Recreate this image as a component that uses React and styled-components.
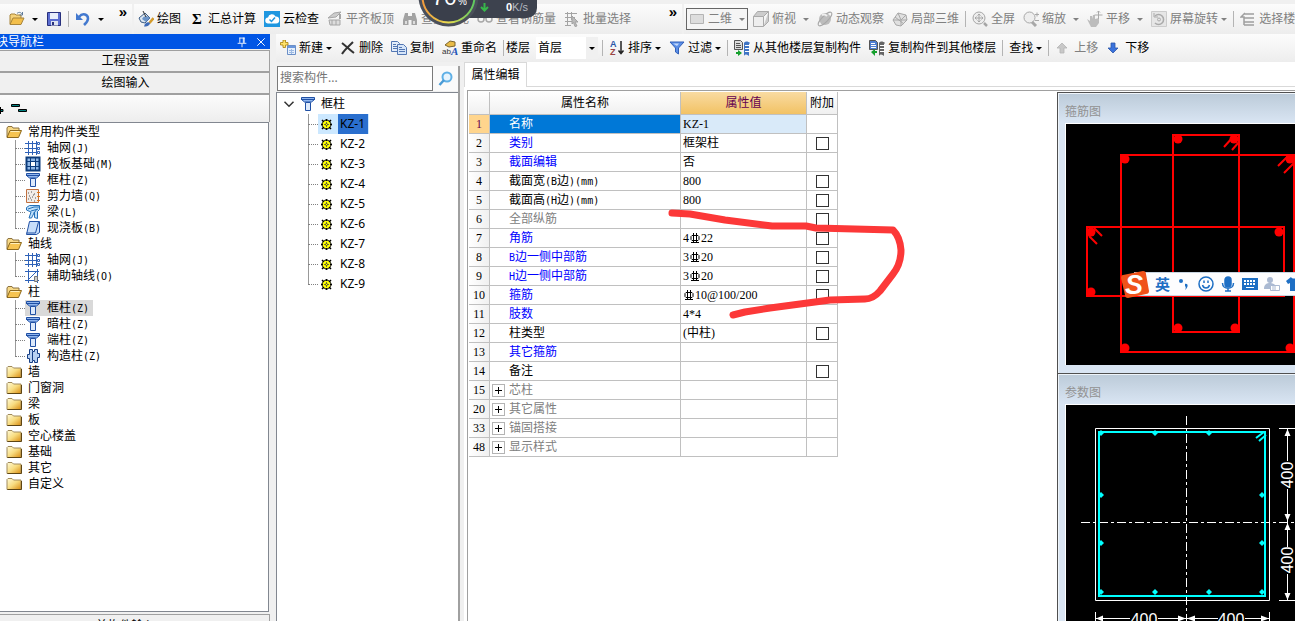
import React from 'react';
import styled, { createGlobalStyle, css } from 'styled-components';

const GlobalStyle = createGlobalStyle`
  * {
    box-sizing: border-box;
  }

  body {
    margin: 0;
    overflow: hidden;
    background: #f0f0f0;
    color: #000;
    font-family: "Noto Sans", "Noto Sans CJK SC", sans-serif;
    font-size: 12px;
    line-height: 16px;
  }

  button, input, select {
    font: inherit;
    color: inherit;
  }

  svg {
    display: block;
    flex: none;
  }
`;

const Page = styled.div`
  position: relative;
  display: flex;
  flex-direction: column;
  height: 100vh;
  overflow: hidden;
`;

/* ---------- toolbars ---------- */

const TopBar = styled.header`
  display: flex;
  flex: none;
  height: 34px;
  padding-top: 4px;
  gap: 2px;
`;

const BarGroup = styled.div`
  display: flex;
  align-items: center;
  overflow: hidden;
  white-space: nowrap;
  background: linear-gradient(#fcfcfc, #ededed);
  flex: ${(p) => p.$flex || 'none'};
  width: ${(p) => p.$width || 'auto'};
  padding-left: ${(p) => p.$left || '0'};
`;

const ItemBar = styled(BarGroup)`
  height: 28px;
`;

const ToolButton = styled.button`
  display: flex;
  align-items: center;
  flex: none;
  gap: 3px;
  height: 22px;
  padding: 0 4px;
  border: 0;
  background: none;
  white-space: nowrap;
  color: ${(p) => (p.$dim ? '#808080' : '#000')};

  ${(p) => p.$boxed && css`
    padding: 0 2px;
    border: 1px solid #666;
    background: #f5f5f5;
    margin-right: 1px;
  `}
`;

const Caret = styled.i`
  flex: none;
  border: 3px solid transparent;
  border-top-color: currentColor;
  border-bottom: 0;
  margin-left: ${(p) => (p.$tight ? '0' : '4px')};
`;

const Divider = styled.span`
  flex: none;
  width: 1px;
  height: 16px;
  margin: 0 2px;
  background: #b4b4b4;
`;

const More = styled.button`
  align-self: flex-start;
  width: 18px;
  padding: 0;
  margin-left: auto;
  border: 0;
  background: none;
  font: bold 15px/16px "Liberation Sans", sans-serif;
`;

const FloorLabel = styled.label`
  display: flex;
  align-items: center;
  gap: 6px;
  padding-right: 2px;
`;

const FloorPicker = styled.span`
  display: flex;
  align-items: center;
  width: 62px;
  height: 22px;
  background: linear-gradient(90deg, #fff 50px, #f0f0f0 50px);

  ${Caret} {
    margin-left: -9px;
    pointer-events: none;
  }
`;

const FloorSelect = styled.select`
  appearance: none;
  width: 62px;
  height: 22px;
  padding: 0 2px;
  border: 0;
  background: none;
`;

/* ---------- left navigation ---------- */

const Workspace = styled.div`
  display: flex;
  flex: 1;
  min-height: 0;
`;

const Sidebar = styled.aside`
  display: flex;
  flex-direction: column;
  flex: none;
  width: 276px;
  padding-right: 6px;
`;

const SidebarTitle = styled.div`
  display: flex;
  align-items: center;
  flex: none;
  height: 15px;
  padding-right: 4px;
  gap: 7px;
  overflow: hidden;
  color: #fff;
  background: #0055e5;
`;

const TitleText = styled.span`
  flex: 1;
  margin-left: -16px;
`;

const TitleButton = styled.button`
  display: flex;
  padding: 0;
  border: 0;
  background: none;
  color: #fff;
`;

const SectionButton = styled.button`
  flex: none;
  height: 22px;
  padding: 0 18px 0 0;
  border: solid #a0a0a0;
  border-width: 1px 1px 1px 0;
  background: #f0f0f0;
  margin-top: ${(p) => (p.$first ? '1px' : '0')};
`;

const TreeTools = styled.div`
  display: flex;
  flex: none;
  align-items: center;
  height: 28px;
  border: solid #a0a0a0;
  border-width: 1px 1px 0 0;
  background: linear-gradient(#fcfcfc, #ededed);
`;

const NavTree = styled.ul`
  flex: 1;
  min-height: 0;
  margin: 0 1px 2px 0;
  padding: 1px 0 0 6px;
  overflow: hidden;
  list-style: none;
  border: solid #828790;
  border-width: 1px 1px 1px 0;
  background: #fff;
`;

const NavChildren = styled.ul`
  margin: 0;
  padding: 0 0 0 9px;
  list-style: none;
`;

const NavRow = styled.div`
  display: flex;
  align-items: center;
  gap: 6px;
  height: 16px;
  width: max-content;
  padding-right: 4px;
  white-space: nowrap;
  background: ${(p) => (p.$active ? '#d9d9d9' : 'none')};
`;

const NavItem = styled.li`
  display: flex;
  align-items: center;
  background: linear-gradient(#999, #999) left top / 1px 100% no-repeat;

  &::before {
    content: "";
    width: 10px;
    border-top: 1px dotted #808080;
  }

  &:last-child {
    background-size: 1px 50%;
  }
`;

const Half = styled.span`
  font: 10px "DejaVu Sans Mono", monospace;
`;

const BottomButton = styled(SectionButton)`
  height: 24px;
  margin-bottom: -17px;
`;

/* ---------- component list ---------- */

const Right = styled.div`
  display: flex;
  flex-direction: column;
  flex: 1;
  min-width: 0;
`;

const Panels = styled.div`
  display: flex;
  flex: 1;
  min-height: 0;
`;

const ListPanel = styled.section`
  display: flex;
  flex-direction: column;
  flex: none;
  width: 184px;
  margin: 4px 4px 0 0;
  border-right: 2px solid #a0a0a0;
`;

const SearchRow = styled.div`
  display: flex;
  height: 26px;
  padding: 0 0 1px 1px;
`;

const SearchInput = styled.input`
  flex: 1;
  min-width: 0;
  padding: 0 2px 2px;
  border: 1px solid #7a7a7a;
  outline: 0;
  background: #fff;

  &::placeholder {
    color: #757575;
  }
`;

const SearchButton = styled.button`
  display: flex;
  align-items: center;
  justify-content: center;
  width: 25px;
  padding: 0;
  border: 0;
  background: #fafafa;
`;

const ItemTree = styled.div`
  flex: 1;
  padding: 1px 0 0 6px;
  border: solid #828790;
  border-width: 1px 0 0 1px;
  background: #fff;
`;

const ItemRoot = styled.div`
  display: flex;
  align-items: center;
  height: 20px;
  gap: 5px;
`;

const ItemList = styled.ul`
  margin: 0 0 0 25px;
  padding: 0;
  list-style: none;
`;

const ItemRow = styled(NavItem)`
  height: 20px;
`;

const ItemBody = styled.span`
  display: flex;
  align-items: center;
  gap: 5px;
  height: 20px;
  padding: 0 1px 0 2px;
  background: ${(p) => (p.$active ? '#cce8ff' : 'none')};
`;

const ItemLabel = styled.span`
  padding: 0 3px 0 2px;
  line-height: 20px;
  background: ${(p) => (p.$active ? '#2a6fce' : 'none')};
`;

/* ---------- property editor ---------- */

const Editor = styled.section`
  display: flex;
  flex-direction: column;
  flex: 1;
  min-width: 0;
  background: #fff;
`;

const TabStrip = styled.div`
  display: flex;
  flex: none;
  height: 25px;

  &::after {
    content: "";
    flex: 1;
    border-bottom: 1px solid #d9d9d9;
  }
`;

const Tab = styled.button`
  width: 63px;
  padding: 0;
  border: 1px solid #d9d9d9;
  border-bottom: 0;
  background: #fff;
`;

const EditorBody = styled.div`
  display: flex;
  flex: 1;
  align-items: flex-start;
  justify-content: space-between;
  min-height: 0;
  margin: 3px 0 0 3px;
  padding: 1px 0 0 1px;
  border: solid #a0a0a0;
  border-width: 1px 0 0 1px;
`;

const Grid = styled.table`
  width: 369px;
  flex: none;
  border-collapse: separate;
  border-spacing: 0;
  table-layout: fixed;
`;

const HeadCell = styled.th`
  width: ${(p) => p.$width};
  height: 23px;
  padding: 0;
  font-weight: normal;
  border: solid #c0c0c0;
  border-width: 0 1px 1px 0;
  color: ${(p) => (p.$active ? '#640050' : '#000')};
  background: ${(p) => (p.$active ? 'linear-gradient(#f9dba2, #f2c264)' : 'linear-gradient(#fff, #f0f0f0)')};
`;

const Cell = styled.td`
  height: 19px;
  padding: 0 0 0 2px;
  line-height: 16px;
  white-space: nowrap;
  border: solid #c0c0c0;
  border-width: 0 1px 1px 0;
  background: ${(p) => (p.$active ? '#d9eaf9' : '#fff')};
  font-family: "Liberation Serif", "Noto Sans CJK SC", serif;
`;

const NumberCell = styled(Cell)`
  padding: 0;
  text-align: center;
  color: ${(p) => (p.$active ? '#640050' : '#000')};
  background: ${(p) => (p.$active ? '#ffd58d' : 'linear-gradient(90deg, #fff, #f0f0f0)')};
`;

const tones = { blue: '#0000ff', grey: '#808080', black: '#000' };

const NameCell = styled(Cell)`
  color: ${(p) => (p.$active ? '#fff' : tones[p.$tone])};
  background: ${(p) => (p.$active ? '#0078d7' : '#fff')};
`;

const NameLine = styled.div`
  display: flex;
  align-items: center;
  gap: 4px;
  padding-left: ${(p) => (p.$indent ? '17px' : '0')};
`;

const Expander = styled.button`
  display: flex;
  align-items: center;
  justify-content: center;
  width: 13px;
  height: 13px;
  padding: 0;
  border: 1px solid #b4b4b4;
  background: #fff;
  color: #000;
`;

const ValueLine = styled.div`
  display: flex;
  align-items: center;
  gap: 1px;
`;

const CheckCell = styled(Cell)`
  padding: 0;
`;

const Tick = styled.input`
  appearance: none;
  display: block;
  width: 13px;
  height: 13px;
  margin: 0 auto;
  border: 1px solid #333;
  background: #fff;
`;

/* ---------- drawings ---------- */

const Dock = styled.aside`
  flex: none;
  width: 238px;
`;

const Drawing = styled.section`
  padding: 1px 0 8px 7px;
  border: solid #505050;
  border-width: 1px 0 0 1px;
  background: #d9e5f3;
  box-shadow: inset 1px 1px #eef4fa;
  overflow: hidden;
`;

const DrawingTitle = styled.h2`
  margin: 0 0 0 -6px;
  padding: 10px 0 3px 6px;
  font-size: 12px;
  line-height: 16px;
  font-weight: normal;
  color: #929292;
  background: linear-gradient(#bccbd9, #d9e5f3);
`;

const Canvas = styled.svg`
  border: solid #fff;
  border-width: 1px 0 0 1px;
  background: #000;
`;

/* ---------- floating things ---------- */

const Marker = styled.svg`
  position: absolute;
  left: 660px;
  top: 200px;
  pointer-events: none;
`;

const Ime = styled.div`
  position: absolute;
  top: 269px;
  right: 0;
  width: 174px;
  height: 30px;
  display: flex;
  align-items: center;
`;

const ImeStrip = styled.div`
  display: flex;
  align-items: center;
  flex: 1;
  gap: 6px;
  height: 24px;
  margin-left: -16px;
  padding-left: 21px;
  overflow: hidden;
  color: #1e6fc4;
  border: solid #c8d4e0;
  border-width: 1px 0;
  background: #fdfdfe;
`;

const ImeLogo = styled.svg`
  position: relative;
`;

const ImeMode = styled.b`
  font-size: 15px;
  line-height: 20px;
`;

const Monitor = styled.div`
  position: absolute;
  left: 418px;
  top: -34px;
  display: flex;
  align-items: flex-end;
  height: 61px;
  color: #fff;
`;

const Speed = styled.div`
  display: flex;
  align-items: center;
  justify-content: space-between;
  width: 88px;
  height: 22px;
  margin: 0 0 9px -30px;
  padding: 0 9px 0 31px;
  border-radius: 0 0 10px 0;
  background: #3d424e;
  font: 11px "Liberation Sans", sans-serif;

  small {
    font-size: 11px;
    color: #b4b8c0;
  }
`;

const Ball = styled.svg`
  z-index: 1;
`;

/* ---------- icons ---------- */

const Svg = ({ size = 16, children, ...rest }) => (
  <svg width={size} height={size} viewBox="0 0 16 16" fill="none" {...rest}>
    {children}
  </svg>
);

const OpenFolder = () => (
  <Svg>
    <path d="M1 13V4l1-1h4l1 1h5v3" fill="#f5d27a" stroke="#a8843a" />
    <path d="M1 13.500 4 7h11l-3 6.500z" fill="#f3bf4b" stroke="#a8843a" />
    <path d="M8 2.500c2-2 4-1 5 .5M13.500 1v3h-3" stroke="#5d7a99" />
  </Svg>
);
const TreeFolderOpen = () => (
  <Svg>
    <path d="M1 13V4l1-1.500h4L7 4h6v3" fill="#f7d987" stroke="#8d7340" />
    <path d="M1 13.500 4 6.500h11.500l-3 7z" fill="#f6c452" stroke="#8d6a20" />
    <path d="M4.500 7.500h9" stroke="#fff0bd" />
  </Svg>
);
const TreeFolder = () => (
  <Svg>
    <defs>
      <linearGradient id="folder" x1="0" y1="0" x2="1" y2="1">
        <stop offset="0" stopColor="#fffbd8" />
        <stop offset=".5" stopColor="#f8dc80" />
        <stop offset="1" stopColor="#d98c10" />
      </linearGradient>
    </defs>
    <path d="M1 13V3.500L2 2.500h4L7.500 4H15v9.500H1z" fill="url(#folder)" stroke="#a08a5c" />
    <path d="M1.500 13.500h14V5" stroke="#5e4513" />
  </Svg>
);
const Save = () => (
  <Svg>
    <path d="M1.500 1.500h13v13h-13z" fill="#5b6dd0" stroke="#28307c" />
    <path d="M4 2h8v6H4z" fill="#e8eefb" />
    <path d="M5 10h7v4.500H5z" fill="#dde3f0" />
    <path d="M6 11h2v3H6z" fill="#28307c" />
  </Svg>
);
const Undo = () => (
  <Svg>
    <path d="M4 6c4-5 9-2 9 1.500 0 3-2 4.500-4 6.500" stroke="#4379cf" strokeWidth="2.500" />
    <path d="M1 2v7h7z" fill="#4379cf" />
  </Svg>
);
const Paint = () => (
  <Svg>
    <path d="m1 7 6-5 5 5-5 5-4-1z" fill="#dce7f2" stroke="#3c5d86" />
    <path d="M4 8c1-3 5-4 8-1l-4 4z" fill="#6b94c8" />
    <path d="m5 0 3 6" stroke="#333" />
    <path d="m15.500 7-4 5" stroke="#d49b2b" strokeWidth="2.500" />
    <path d="M6 15.500c1-4 4-5 6-3.500 0 2-3 4-6 3.500z" fill="#3d6bb8" />
  </Svg>
);
const Sigma = () => (
  <Svg>
    <text x="3" y="13" fontFamily="Liberation Serif, serif" fontWeight="bold" fontSize="15" fill="#000">Σ</text>
  </Svg>
);
const Cloud = () => (
  <Svg>
    <path d="M0 0h16v16H0z" fill="#1f97e0" />
    <path d="M4.500 12.500a3 3 0 0 1-.5-6 4 4 0 0 1 7.500-1 3.500 3.500 0 0 1 .5 7z" fill="#fff" />
    <path d="m5.500 8.500 2 2 3.500-4" stroke="#1f97e0" strokeWidth="1.500" />
  </Svg>
);
const AlignTop = () => (
  <Svg stroke="#a6a6a6">
    <path d="m1 7 6-5 7-1-5 5z" fill="#ccc" />
    <path d="M2 9h11v5H3zM5 9v5M9 9v5" fill="#ddd" />
    <path d="M13 3v5" strokeWidth="2" />
  </Svg>
);
const Binoculars = () => (
  <Svg fill="#a3a3a3">
    <path d="M3 2h3v3h4V2h3l2 7v5H9.500V9h-3v5H1V9z" />
    <path d="M3 10h2v3H3zM11 10h2v3h-2z" fill="#ddd" />
  </Svg>
);
const Glasses = () => (
  <Svg stroke="#a8a8a8" strokeWidth="1.500">
    <circle cx="4" cy="8" r="3" />
    <circle cx="12" cy="8" r="3" />
    <path d="M7 7h2" />
  </Svg>
);
const BatchPick = () => (
  <Svg stroke="#a3a3a3">
    <path d="M1 2.500h12M1 6.500h10M1 10.500h7M1 14.500h6M3.500 1v14M7.500 1v8" />
    <path d="m8 5 6 6h-3l2 4-2 .5-1.500-4L8 13z" fill="#bbb" />
  </Svg>
);
const Plane = () => (
  <Svg>
    <path d="M1.500 3.500h13v9h-13z" fill="#ddd" stroke="#b4b4b4" />
  </Svg>
);
const Cube = () => (
  <Svg stroke="#aaa">
    <path d="M.500 5.500h10v10h-10z" fill="#eee" />
    <path d="m.5 5.500 4-5h11l-5 5zM15.500.500v10l-5 5" fill="#ccc" />
  </Svg>
);
const Orbit = () => (
  <Svg>
    <circle cx="8" cy="8" r="6" fill="#bdbdbd" />
    <ellipse cx="8" cy="8" rx="9" ry="3" transform="rotate(-45 8 8)" stroke="#a8a8a8" />
    <path d="M5 4c2-1 4 0 5 1" stroke="#eee" strokeWidth="2" />
  </Svg>
);
const Part3d = () => (
  <Svg stroke="#a8a8a8">
    <path d="m1 9 5-7 8 2 1 5-6 6-5-1z" fill="#e0e0e0" />
    <path d="m6 2 3 7v6M1 9h8l6 0M9 9l5-5M3 6l9 7" />
  </Svg>
);
const FullView = () => (
  <Svg stroke="#a6a6a6">
    <circle cx="7" cy="7" r="6" fill="#eee" />
    <path d="M7 3v8M3 7h8M5.500 4.500 7 3l1.500 1.500M5.500 9.500 7 11l1.500-1.500M4.500 5.500 3 7l1.500 1.500M9.500 5.500 11 7 9.500 8.500" />
    <path d="m12 12 3 3" strokeWidth="2.500" />
  </Svg>
);
const Zoom = () => (
  <Svg stroke="#a8a8a8">
    <circle cx="6.500" cy="6.500" r="5.500" fill="#eee" />
    <path d="m9 11 4 4" strokeWidth="3" />
    <path d="M12 3.500h4M14 1.500v4M12 9.500h4" />
  </Svg>
);
const Pan = () => (
  <Svg>
    <path d="m0 8 3 2V5h2v3l1-4h2v4l4-1v5l-3 4H4z" fill="#bcbcbc" />
    <path d="M11.500 0v8M7.500 4h8M10 1.500 11.500 0 13 1.500" stroke="#aaa" />
  </Svg>
);
const Rotate = () => (
  <Svg stroke="#aaa">
    <path d="M.500.500h15v15H.500z" fill="#e6e6e6" stroke="#ccc" />
    <path d="M4 5a5 5 0 1 1 0 7" strokeWidth="1.500" />
    <path d="M3 2v4h4" />
    <circle cx="8" cy="8.500" r="1.500" />
  </Svg>
);
const Floors = () => (
  <Svg stroke="#9f9f9f" strokeWidth="1.500">
    <path d="M4 3h10M4 7h10M4 11h10M4 14h10M5 2 1 6h3v8" />
  </Svg>
);
const NewItem = () => (
  <Svg>
    <path d="M7.500 5.500h8v9h-8z" fill="#e7f0fb" stroke="#6b8fc7" />
    <path d="M8 6h7v2H8z" fill="#6b97dc" />
    <path d="M9 10.500h5M9 12.500h5M11.500 9v5" stroke="#9cb9e2" />
    <path d="M3 0h2.500v2.500H8V5H5.500v2.500H3V5H.5V2.500H3z" fill="#ffe26a" stroke="#a67e0b" strokeWidth=".8" />
  </Svg>
);
const Cross = () => (
  <Svg stroke="#333" strokeWidth="2">
    <path d="M2 3c5 4 8 7 12 10M13 2C9 6 5 9 2 14" />
  </Svg>
);
const Copy = () => (
  <Svg stroke="#5377b3">
    <path d="M.500 1.500h6l2 2v8h-8z" fill="#e4eefb" />
    <path d="M2 4.500h3M2 6.500h4M2 8.500h4" />
    <path d="M6.500 4.500h6l3 3v7h-9z" fill="#d6e5f9" />
    <path d="M8 7.500h3M8 9.500h6M8 11.500h6" />
  </Svg>
);
const Rename = () => (
  <Svg>
    <path d="m3 5 5-4 5 1v4L7 7z" fill="#e8bb48" stroke="#7a6430" />
    <text x="0" y="14" fontFamily="Liberation Sans, sans-serif" fontSize="8" fill="#333">ab</text>
    <text x="9" y="15" fontFamily="Liberation Serif, serif" fontStyle="italic" fontWeight="bold" fontSize="11" fill="#2455b8">A</text>
  </Svg>
);
const Sort = () => (
  <Svg>
    <g fontFamily="Liberation Sans, sans-serif" fontWeight="bold" fontSize="9">
      <text x="1" y="7" fill="#2b56a8">A</text>
      <text x="1" y="15" fill="#944">Z</text>
    </g>
    <path d="M12 1v12M9.500 10.500l2.500 3 2.500-3" stroke="#222" strokeWidth="1.500" />
  </Svg>
);
const Filter = () => (
  <Svg>
    <path d="M1 2h14L9.500 8v6l-3-2V8z" fill="#5b8fe8" stroke="#3260b8" />
    <path d="M4 3.500h6L8 6z" fill="#c3d9fb" />
  </Svg>
);
const CopyFloor = ({ out }) => (
  <Svg>
    <path d="M.500.500h6l2 2v7h-8z" fill={out ? '#4f7ed0' : '#ddd'} stroke="#555" />
    <path d="M2 3.500h4M2 5.500h5M2 7.500h5" stroke={out ? '#fff' : '#555'} />
    <path d="M10 3c1-2 4-2 6 0l-1 1v12c-2-2-4-2-5 0z" fill={out ? '#666' : '#3f74c4'} />
    <path d="M11 5.500h5M11 8.500h5M11 11.500h5" stroke="#fff" />
    <path d={out ? 'M2 12l4-3v2h2v2H6v3z' : 'M8 13l-4-3v2H2v2h2v2z'} fill="#15a02c" />
  </Svg>
);
const Arrow = ({ up }) => (
  <Svg>
    <path
      d="M5 3h4v5h3L7 13 2 8h3z"
      transform={up ? 'rotate(180 7 8)' : undefined}
      fill={up ? '#c8c8c8' : '#3a72dc'}
      stroke={up ? '#b4b4b4' : '#2c55a8'}
      strokeWidth=".8"
    />
  </Svg>
);
const GridIcon = () => (
  <Svg stroke="#2f62b8">
    <path d="M0 3.500h12M0 8.500h12M0 12.500h12M3.500 1v14M7.500 1v14M11.500 1v14" />
    <path d="M12.500 2.500h2v2h-2zM12.500 7.500h2v2h-2zM12.500 11.500h2v2h-2z" fill="#fff" />
  </Svg>
);
const Raft = () => (
  <Svg stroke="#0c3c7c">
    <path d="M1.500 1.500h13v13h-13z" fill="#8fb7e6" strokeWidth="2" />
    <path d="M5.500 5.500h5v5h-5z" fill="#fff" />
    <path d="M1 5.500h14M1 10.500h14M5.500 1v14M10.500 1v14" />
  </Svg>
);
const Column = () => (
  <Svg>
    <path d="M1.500 1.500h13v2l-3 2.500h-7l-3-2.500z" fill="#8fb5ee" stroke="#2050a4" />
    <path d="M5.500 6.500h5v8h-5z" fill="#dce9fb" stroke="#2050a4" />
    <path d="M1 3.500h14" stroke="#2050a4" />
  </Svg>
);
const Wall = () => (
  <Svg>
    <path d="M1.500 1.500h12v13h-12z" fill="#f1ece8" stroke="#c07040" />
    <path d="M3 5h1M6 4h1M9 6h1M4 8h1M7 9h1M10 10h1M3 11h1M6 12h1M9 13h1M5 10h1M8 7h1" stroke="#555" />
    <path d="M12 4.500h3M12 8.500h3M12 12.500h3" stroke="#e07818" />
  </Svg>
);
const Beam = () => (
  <Svg>
    <path d="m1.500 3.500 3-2h10v4l-2 2v7l-3-1V8l-3 6H4l2-6-4.500-2z" fill="#bfe0fa" stroke="#2470b8" />
    <path d="m3 5 6-2 5 0M6 7l7-2M9 9l3-4" stroke="#2470b8" />
  </Svg>
);
const Slab = () => (
  <Svg>
    <path d="M4.500 1.500h10v11l-3 2h-10z" fill="#c8defa" stroke="#2050a4" />
    <path d="M1.500 13h9l3-11" stroke="#2050a4" />
  </Svg>
);
const AuxAxis = () => (
  <Svg stroke="#2f62b8">
    <path d="M0 3.500h14M3.500 1v14M12.500 1v14M0 12.500h14M2 13l9-9" />
    <path d="M9.500 8.500h3v5h-3z" fill="#ccc" stroke="#777" />
  </Svg>
);
const Structural = () => (
  <Svg>
    <path d="M4.500 1.500h3v2h2v-2h3v4h2v4h-2v5h-3v-2h-2v2h-3v-4h-2v-4h2z" fill="#b9d2f2" stroke="#173f86" />
    <path d="M7.500 4v8" stroke="#173f86" />
  </Svg>
);
const Gear = () => (
  <svg width="13" height="13" viewBox="0 0 13 13" fill="none">
    <circle cx="6.500" cy="6.500" r="4.500" fill="#ff0" stroke="#222" />
    <path
      d="M6.500 1v2M6.500 10v2M1 6.500h2M10 6.500h2M2 2l2 2M9 9l2 2M11 2 9 4M4 9l-2 2"
      stroke="#000"
      strokeWidth="1.500"
    />
    <path d="M6.500 4.500h.01M6.500 8.500h.01M4.500 6.500h.01M8.500 6.500h.01" stroke="#666" strokeLinecap="square" />
    <circle cx="6.500" cy="6.500" r="1" fill="#ff0" stroke="#222" strokeWidth=".8" />
  </svg>
);
const Magnifier = () => (
  <Svg>
    <circle cx="9" cy="6" r="4.500" fill="#e7f4fd" stroke="#5fb0e6" strokeWidth="2" />
    <path d="m6 9-4.500 5" stroke="#4a9bd6" strokeWidth="2.500" />
  </Svg>
);
const Rebar = () => (
  <svg width="10" height="11" viewBox="0 0 10 11" fill="none" stroke="#000">
    <path d="M2 2.500h6l1 1v3l-1 1H2l-1-1v-3zM3.500 0v9M6.500 0v9M1 9.500h8" />
  </svg>
);

/* ---------- data ---------- */

const nav = [
  {
    name: '常用构件类型',
    items: [
      ['轴网(J)', GridIcon],
      ['筏板基础(M)', Raft],
      ['框柱(Z)', Column],
      ['剪力墙(Q)', Wall],
      ['梁(L)', Beam],
      ['现浇板(B)', Slab],
    ],
  },
  { name: '轴线', items: [['轴网(J)', GridIcon], ['辅助轴线(O)', AuxAxis]] },
  {
    name: '柱',
    items: [
      ['框柱(Z)', Column, true],
      ['暗柱(Z)', Column],
      ['端柱(Z)', Column],
      ['构造柱(Z)', Structural],
    ],
  },
  ...['墙', '门窗洞', '梁', '板', '空心楼盖', '基础', '其它', '自定义'].map((name) => ({ name })),
];

// "#" in a value stands for the rebar grade sign
const properties = [
  { no: 1, name: '名称', value: 'KZ-1', active: true },
  { no: 2, name: '类别', value: '框架柱', tone: 'blue', tick: true },
  { no: 3, name: '截面编辑', value: '否', tone: 'blue' },
  { no: 4, name: '截面宽(B边)(mm)', value: '800', tick: true },
  { no: 5, name: '截面高(H边)(mm)', value: '800', tick: true },
  { no: 6, name: '全部纵筋', value: '', tone: 'grey', tick: true },
  { no: 7, name: '角筋', value: '4#22', tone: 'blue', tick: true },
  { no: 8, name: 'B边一侧中部筋', value: '3#20', tone: 'blue', tick: true },
  { no: 9, name: 'H边一侧中部筋', value: '3#20', tone: 'blue', tick: true },
  { no: 10, name: '箍筋', value: '#10@100/200', tone: 'blue', tick: true },
  { no: 11, name: '肢数', value: '4*4', tone: 'blue' },
  { no: 12, name: '柱类型', value: '(中柱)', tick: true },
  { no: 13, name: '其它箍筋', value: '', tone: 'blue' },
  { no: 14, name: '备注', value: '', tick: true },
  { no: 15, name: '芯柱', value: '', tone: 'grey', group: true },
  { no: 20, name: '其它属性', value: '', tone: 'grey', group: true },
  { no: 33, name: '锚固搭接', value: '', tone: 'grey', group: true },
  { no: 48, name: '显示样式', value: '', tone: 'grey', group: true },
];

const MixedText = ({ children }) => (
  <span>
    {children.split(/([!-~]+)/).map((part, i) => (i % 2 ? <Half key={i}>{part}</Half> : part))}
  </span>
);

const Tool = ({ icon: Icon, label, caret, tight, ...rest }) => (
  <ToolButton {...rest}>
    {Icon && <Icon />}
    {label}
    {caret && <Caret $tight={tight} />}
  </ToolButton>
);

const TopToolbar = () => (
  <TopBar>
    <BarGroup $width="132px" $left="5px">
      <Tool icon={OpenFolder} caret aria-label="打开" />
      <Tool icon={Save} aria-label="保存" />
      <Divider />
      <Tool icon={Undo} caret aria-label="撤销" />
      <More>»</More>
    </BarGroup>
    <BarGroup $width="548px">
      <Tool icon={Paint} label="绘图" />
      <Tool icon={Sigma} label="汇总计算" />
      <Tool icon={Cloud} label="云检查" />
      <Tool icon={AlignTop} label="平齐板顶" $dim />
      <Tool icon={Binoculars} label="查找图元" $dim />
      <Tool icon={Glasses} label="查看钢筋量" $dim />
      <Tool icon={BatchPick} label="批量选择" $dim />
      <More>»</More>
    </BarGroup>
    <BarGroup $flex="1" $left="2px">
      <Tool icon={Plane} label="二维" caret $dim $boxed />
      <Tool icon={Cube} label="俯视" caret $dim />
      <Tool icon={Orbit} label="动态观察" $dim />
      <Tool icon={Part3d} label="局部三维" $dim />
      <Divider />
      <Tool icon={FullView} label="全屏" $dim />
      <Tool icon={Zoom} label="缩放" caret $dim />
      <Tool icon={Pan} label="平移" caret $dim />
      <Tool icon={Rotate} label="屏幕旋转" caret tight $dim />
      <Divider />
      <Tool icon={Floors} label="选择楼层" $dim />
    </BarGroup>
  </TopBar>
);

const ComponentToolbar = () => (
  <ItemBar>
    <Tool icon={NewItem} label="新建" caret tight />
    <Tool icon={Cross} label="删除" />
    <Tool icon={Copy} label="复制" />
    <Tool icon={Rename} label="重命名" />
    <Divider />
    <FloorLabel>
      楼层
      <FloorPicker>
        <FloorSelect defaultValue="首层">
          <option>首层</option>
        </FloorSelect>
        <Caret />
      </FloorPicker>
    </FloorLabel>
    <Divider />
    <Tool icon={Sort} label="排序" caret tight />
    <Tool icon={Filter} label="过滤" caret tight />
    <Divider />
    <Tool icon={CopyFloor} label="从其他楼层复制构件" />
    <Tool icon={() => <CopyFloor out />} label="复制构件到其他楼层" />
    <Divider />
    <Tool label="查找" caret tight />
    <Divider />
    <Tool icon={() => <Arrow up />} label="上移" $dim />
    <Tool icon={Arrow} label="下移" />
  </ItemBar>
);

const Navigation = () => (
  <Sidebar>
    <SidebarTitle>
      <TitleText>模块导航栏</TitleText>
      <TitleButton aria-label="固定">
        <Svg size={14} stroke="#fff">
          <path d="M5.500 3v6M10.500 3v6M5 3.500h6M3 9.500h10M8 10v4M9.500 3v6" />
        </Svg>
      </TitleButton>
      <TitleButton aria-label="关闭">
        <Svg size={10} stroke="#fff" strokeWidth="1.500">
          <path d="m2 2 12 12M14 2 2 14" />
        </Svg>
      </TitleButton>
    </SidebarTitle>
    <SectionButton $first>工程设置</SectionButton>
    <SectionButton>绘图输入</SectionButton>
    <TreeTools>
      <svg width="30" height="16" viewBox="0 0 30 16" fill="#008080" stroke="#000">
        <path d="M-3 8.500h6v2h-6zM11.500 3.500h8v2h-8zM18.500 8.500h8v2h-8z" />
        <path d="M.5 6v7" />
      </svg>
    </TreeTools>
    <NavTree>
      {nav.map((group) => (
        <li key={group.name}>
          <NavRow>
            {group.items ? <TreeFolderOpen /> : <TreeFolder />}
            <span>{group.name}</span>
          </NavRow>
          {group.items && (
            <NavChildren>
              {group.items.map(([name, Icon, active]) => (
                <NavItem key={name}>
                  <NavRow $active={active}>
                    <Icon />
                    <MixedText>{name}</MixedText>
                  </NavRow>
                </NavItem>
              ))}
            </NavChildren>
          )}
        </li>
      ))}
    </NavTree>
    <BottomButton>单构件输入</BottomButton>
  </Sidebar>
);

const ComponentList = () => (
  <ListPanel>
    <SearchRow>
      <SearchInput placeholder="搜索构件..." aria-label="搜索构件" />
      <SearchButton aria-label="搜索">
        <Magnifier />
      </SearchButton>
    </SearchRow>
    <ItemTree>
      <ItemRoot>
        <Svg size={12} stroke="#333" strokeWidth="2">
          <path d="m2 5 6 6 6-6" />
        </Svg>
        <Column />
        框柱
      </ItemRoot>
      <ItemList>
        {[1, 2, 3, 4, 5, 6, 7, 8, 9].map((n) => (
          <ItemRow key={n}>
            <ItemBody $active={n === 1}>
              <Gear />
              <ItemLabel $active={n === 1}>KZ-{n}</ItemLabel>
            </ItemBody>
          </ItemRow>
        ))}
      </ItemList>
    </ItemTree>
  </ListPanel>
);

const PropertyTable = () => (
  <Grid>
    <thead>
      <tr>
        <HeadCell $width="21px" />
        <HeadCell $width="191px">属性名称</HeadCell>
        <HeadCell $width="126px" $active>属性值</HeadCell>
        <HeadCell $width="31px">附加</HeadCell>
      </tr>
    </thead>
    <tbody>
      {properties.map(({ no, name, value, tone = 'black', active, tick, group }) => (
        <tr key={no}>
          <NumberCell $active={active}>{no}</NumberCell>
          <NameCell $active={active} $tone={tone}>
            <NameLine $indent={!group}>
              {group && (
                <Expander aria-label={`展开${name}`}>
                  <svg width="7" height="7" viewBox="0 0 7 7" stroke="#000">
                    <path d="M0 3.500h7M3.500 0v7" />
                  </svg>
                </Expander>
              )}
              <MixedText>{name}</MixedText>
            </NameLine>
          </NameCell>
          <Cell $active={active}>
            <ValueLine>
              {value.split(/(#)/).map((part, i) => (part === '#' ? <Rebar key={i} /> : <span key={i}>{part}</span>))}
            </ValueLine>
          </Cell>
          <CheckCell>{tick && <Tick type="checkbox" aria-label={`附加${name}`} />}</CheckCell>
        </tr>
      ))}
    </tbody>
  </Grid>
);

const hoopDots = [
  [1178, 139], [1234, 139], [1178, 328], [1235, 328],
  [1125, 159], [1290, 159], [1125, 348], [1290, 348],
  [1091, 232], [1279, 232], [1091, 292],
];

const HoopDrawing = () => (
  <Drawing>
    <DrawingTitle>箍筋图</DrawingTitle>
    <Canvas width="230" height="242" viewBox="1066 124 229 241" fill="none" stroke="#f00" strokeWidth="2">
      <path d="M1173 135h66v197h-66zM1121 155h173v197h-173zM1087 227h197v69h-197z" />
      <path d="m1224 147 9-10M1232 150l7-8M1278 166l11-11M1284 173l10-10M1089 236l8 8M1094 228l8 8" />
      <g fill="#f00" stroke="none">
        {hoopDots.map(([x, y]) => <circle key={`${x}-${y}`} cx={x} cy={y} r="4.500" />)}
      </g>
    </Canvas>
  </Drawing>
);

const bars = [
  [1155, 433], [1209, 433], [1155, 592], [1209, 592],
  [1101, 495], [1101, 543], [1262, 495], [1262, 543],
  [1101, 433], [1101, 592], [1262, 592],
];

const SectionDrawing = () => (
  <Drawing>
    <DrawingTitle>参数图</DrawingTitle>
    <Canvas width="230" height="217" viewBox="1066 405 229 216" fill="none" stroke="#fff">
      <path d="M1095.500 428.500h174v172h-174z" />
      <path d="M1186.500 416v205M1081 522.500h214" strokeDasharray="9 3 3 3" />
      <path d="M1099 432h166v164h-166z" stroke="#0ff" strokeWidth="2" />
      <path d="m1256 438 8-6M1259 441l7-6" stroke="#0ff" strokeWidth="2" />
      <g fill="#0ff" stroke="none">
        {bars.map(([x, y]) => <path key={`${x}-${y}`} d={`M${x - 3} ${y}l3-3 3 3-3 3z`} />)}
      </g>
      <path d="M1279 428.500h16M1279 600.500h16M1287.500 428v33M1287.500 489v58M1287.500 574v26" />
      <path d="M1095.500 612v9M1269.500 612v9M1096 618.500h34M1158 618.500h60M1245 618.500h24" />
      <g fill="#fff" stroke="none">
        <path d="m1287.500 429 3 7h-6zM1287.500 521l3-7h-6zM1287.500 523l3 7h-6zM1287.500 600l3-7h-6z" />
        <path d="m1096 618.500 7-3v6zM1186 618.500l-8-3v6zM1187 618.500l8-3v6zM1269 618.500l-8-3v6z" />
        <g fontFamily="Liberation Sans, sans-serif" fontSize="16" textAnchor="middle">
          <text x="1144" y="625">400</text>
          <text x="1231" y="625">400</text>
          <text transform="translate(1293 475) rotate(-90)">400</text>
          <text transform="translate(1293 560) rotate(-90)">400</text>
        </g>
      </g>
    </Canvas>
  </Drawing>
);

const ImeBar = () => (
  <Ime>
    <ImeLogo width="29" height="29" viewBox="0 0 29 29">
      <path d="M2 5 22 1q3 0 3 3l3 17q0 3-3 3L7 28q-3 0-3-3L0 8q0-3 2-3z" fill="#f0521a" />
      <text x="4" y="24" fontFamily="Liberation Sans, sans-serif" fontWeight="bold" fontStyle="italic" fontSize="27" fill="#fff">S</text>
    </ImeLogo>
    <ImeStrip>
      <ImeMode>英</ImeMode>
      <Svg fill="#1e6fc4">
        <circle cx="5" cy="5" r="2" />
        <path d="M9 8c3-1 4 3 0 6 1-2 1-3 0-4z" />
      </Svg>
      <Svg stroke="#1e6fc4" strokeWidth="1.500">
        <circle cx="8" cy="8" r="7" />
        <path d="M4.500 9c1 4 6 4 7 0M6 4.500v2.500M10 4.500v2.500" />
      </Svg>
      <Svg stroke="#1e6fc4" strokeWidth="1.500">
        <path d="M8 1a3 3 0 0 1 3 3v4a3 3 0 0 1-6 0V4a3 3 0 0 1 3-3z" fill="#1e6fc4" />
        <path d="M2.500 7c0 7 11 7 11 0M8 12v3M5 15h6" />
      </Svg>
      <Svg>
        <path d="M0 2h16v12H0z" fill="#1e6fc4" />
        <path d="M2 5h12M2 8h12" stroke="#fff" strokeWidth="2" strokeDasharray="2 1" />
        <path d="M4 11.500h8" stroke="#fff" />
      </Svg>
      <Svg fill="#aab9d2">
        <circle cx="6" cy="4" r="3" />
        <path d="M0 13c0-5 3-6 6-6s4 1 5 2H7v4z" />
        <path d="M6.500 9.500h9v5h-9zM9 10v4M11 10v4" stroke="#aab9d2" fill="#fff" />
      </Svg>
      <Svg fill="#1e6fc4">
        <path d="m0 5 5-4c1 2 5 2 6 0l5 4-2 3-2-1v8H4V7L2 8z" />
      </Svg>
    </ImeStrip>
  </Ime>
);

const NetMonitor = () => (
  <Monitor>
    <Ball width="61" height="61" viewBox="0 0 61 61">
      <defs>
        <linearGradient id="ring">
          <stop offset="0" stopColor="#f09a3c" />
          <stop offset=".5" stopColor="#e8dc50" />
          <stop offset="1" stopColor="#5cc860" />
        </linearGradient>
      </defs>
      <circle cx="30.500" cy="30.500" r="30" fill="#4a4f5a" />
      <circle cx="30.500" cy="30.500" r="26" fill="#3a3f4b" stroke="url(#ring)" strokeWidth="2" />
      <g fontFamily="Liberation Sans, sans-serif" fill="#fff">
        <text x="14" y="39" fontSize="22">70</text>
        <text x="40" y="39" fontSize="10">%</text>
      </g>
    </Ball>
    <Speed>
      <svg width="9" height="9" viewBox="0 0 9 9" fill="none" stroke="#37b84a" strokeWidth="2">
        <path d="M4.500 0v7M1 4l3.500 3.500L8 4" />
      </svg>
      <span>
        <b>0</b>
        <small>K/s</small>
      </span>
    </Speed>
  </Monitor>
);

const App = () => (
  <>
    <GlobalStyle />
    <Page>
      <TopToolbar />
      <Workspace>
        <Navigation />
        <Right>
          <ComponentToolbar />
          <Panels>
            <ComponentList />
            <Editor>
              <TabStrip>
                <Tab>属性编辑</Tab>
              </TabStrip>
              <EditorBody>
                <PropertyTable />
                <Dock>
                  <HoopDrawing />
                  <SectionDrawing />
                </Dock>
              </EditorBody>
            </Editor>
          </Panels>
        </Right>
      </Workspace>
      <Marker width="250" height="125" viewBox="660 200 250 125" fill="none">
        <path
          d="M672 213l18 1 35 6 47 6h34l10 2 77 2q7 7 8 20 0 14-8 24l-13 17q-7 8-15 8l-35 1-30 4-30 4-25 4-12 3"
          stroke="#fc3838"
          strokeWidth="7"
          strokeLinecap="round"
          strokeLinejoin="round"
        />
      </Marker>
      <ImeBar />
      <NetMonitor />
    </Page>
  </>
);

export default App;
